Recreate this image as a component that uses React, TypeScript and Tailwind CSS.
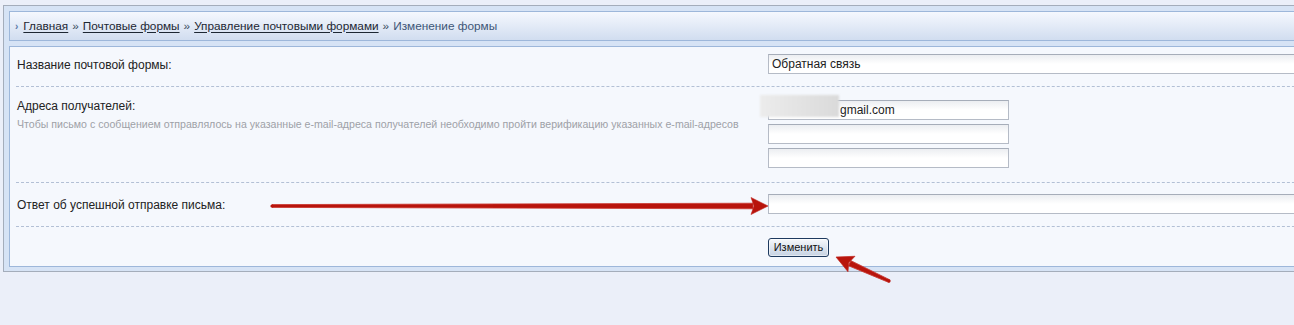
import React from "react";

const FONT = "font-['Liberation_Sans','DejaVu_Sans',Arial,sans-serif]";

const INPUT =
  "block h-[20px] border border-[#b5bbc6] border-t-[#a6adb9] bg-white bg-gradient-to-b from-[#eceef1] via-white to-white px-[3px] text-[12px] leading-[18px] text-[#222] outline-none";

function Arrow({ x1, y1, x2, y2 }: { x1: number; y1: number; x2: number; y2: number }) {
  const len = Math.hypot(x2 - x1, y2 - y1);
  const ang = (Math.atan2(y2 - y1, x2 - x1) * 180) / Math.PI;
  return (
    <g transform={`translate(${x2} ${y2}) rotate(${ang})`}>
      <path
        d={`M ${-len} -1.4 L -15 -2.8 L -15 2.8 L ${-len} 1.4 Z`}
        fill="#b8140c"
        stroke="#c9362f"
        strokeWidth="0.8"
        strokeLinejoin="round"
      />
      <circle cx={-len} cy={0} r={1.6} fill="#b8140c" />
      <path d="M -17 -8.5 L 0 0 L -17 8.5 L -14 0 Z" fill="#b8140c" stroke="#c0241c" strokeWidth="0.6" strokeLinejoin="round" />
    </g>
  );
}

export default function App() {
  return (
    <div className={`relative h-[325px] w-full overflow-hidden bg-[#ebeff9] ${FONT} text-[12px] text-[#222]`}>
      <div className="ml-[3px] mt-[5px] w-[1400px] border border-[#a4adbb] bg-[#d6e3f5] px-[5px] pt-[5px] pb-[4px]">
        {/* breadcrumbs */}
        <div className="flex h-[30px] items-center border border-[#9db7da] bg-gradient-to-b from-[#f5f8fe] to-[#d1ddf0] pl-[5px] pt-[1px] text-[11.8px]">
          <span className="mr-[5px] text-[10px] font-bold leading-none text-[#5a7aa8]">›</span>
          <a className="text-[#1d2733] underline underline-offset-[2px]">Главная</a>
          <span className="mx-[4px] text-[#3b4b60]">»</span>
          <a className="text-[#1d2733] underline underline-offset-[2px]">Почтовые формы</a>
          <span className="mx-[4px] text-[#3b4b60]">»</span>
          <a className="text-[#1d2733] underline underline-offset-[2px]">Управление почтовыми формами</a>
          <span className="mx-[4px] text-[#3b4b60]">»</span>
          <span className="text-[#3e5677]">Изменение формы</span>
        </div>

        {/* form */}
        <div className="mt-[5px] border border-[#9db7da] bg-[#f5f8fd]">
          <div className="mx-[6px] flex items-center border-b border-dashed border-[#b3c0d5] pt-[7px] pb-[12px]">
            <div className="w-[752px] pl-[1px] pt-[2px]">Название почтовой формы:</div>
            <input readOnly defaultValue="Обратная связь" className={`${INPUT} w-[600px]`} />
          </div>

          <div className="mx-[6px] flex items-start border-b border-dashed border-[#b3c0d5] pt-[13px] pb-[14px]">
            <div className="w-[752px] pl-[1px]">
              <div className="leading-[13px]">Адреса получателей:</div>
              <div className="mt-[4px] text-[10.6px] leading-[14px] text-[#9ea1a7]">
                Чтобы письмо с сообщением отправлялось на указанные e-mail-адреса получателей необходимо пройти
                верификацию указанных e-mail-адресов
              </div>
            </div>
            <div className="flex flex-col gap-[4px]">
              <div className="relative">
                <input readOnly defaultValue="gmail.com" className={`${INPUT} w-[241px] pl-[71px]`} />
                <div className="absolute left-[-8px] top-[-5px] h-[22px] w-[79px] bg-gradient-to-r from-[#ececec] to-[#dadada] blur-[1px]" />
              </div>
              <input readOnly className={`${INPUT} w-[241px]`} />
              <input readOnly className={`${INPUT} w-[241px]`} />
            </div>
          </div>

          <div className="mx-[6px] flex items-center border-b border-dashed border-[#b3c0d5] pt-[11px] pb-[12px]">
            <div className="w-[752px] pl-[1px] pt-[2px]">Ответ об успешной отправке письма:</div>
            <input readOnly className={`${INPUT} w-[600px]`} />
          </div>

          <div className="mx-[6px] flex pt-[11px] pb-[9px]">
            <div className="w-[752px]" />
            <button className="h-[19px] w-[61px] rounded-[3px] border border-[#1e3a5f] bg-gradient-to-b from-[#f7f9fc] to-[#c6d2e2] text-[11px] leading-[15px] text-[#111] shadow-[inset_0_0_0_1px_#ffffff80]">
              Изменить
            </button>
          </div>
        </div>
      </div>

      {/* annotation arrows */}
      <svg className="pointer-events-none absolute inset-0" width="1294" height="325">
        <Arrow x1={272} y1={206} x2={768} y2={206} />
        <Arrow x1={889} y1={281} x2={836} y2={257} />
      </svg>
    </div>
  );
}
